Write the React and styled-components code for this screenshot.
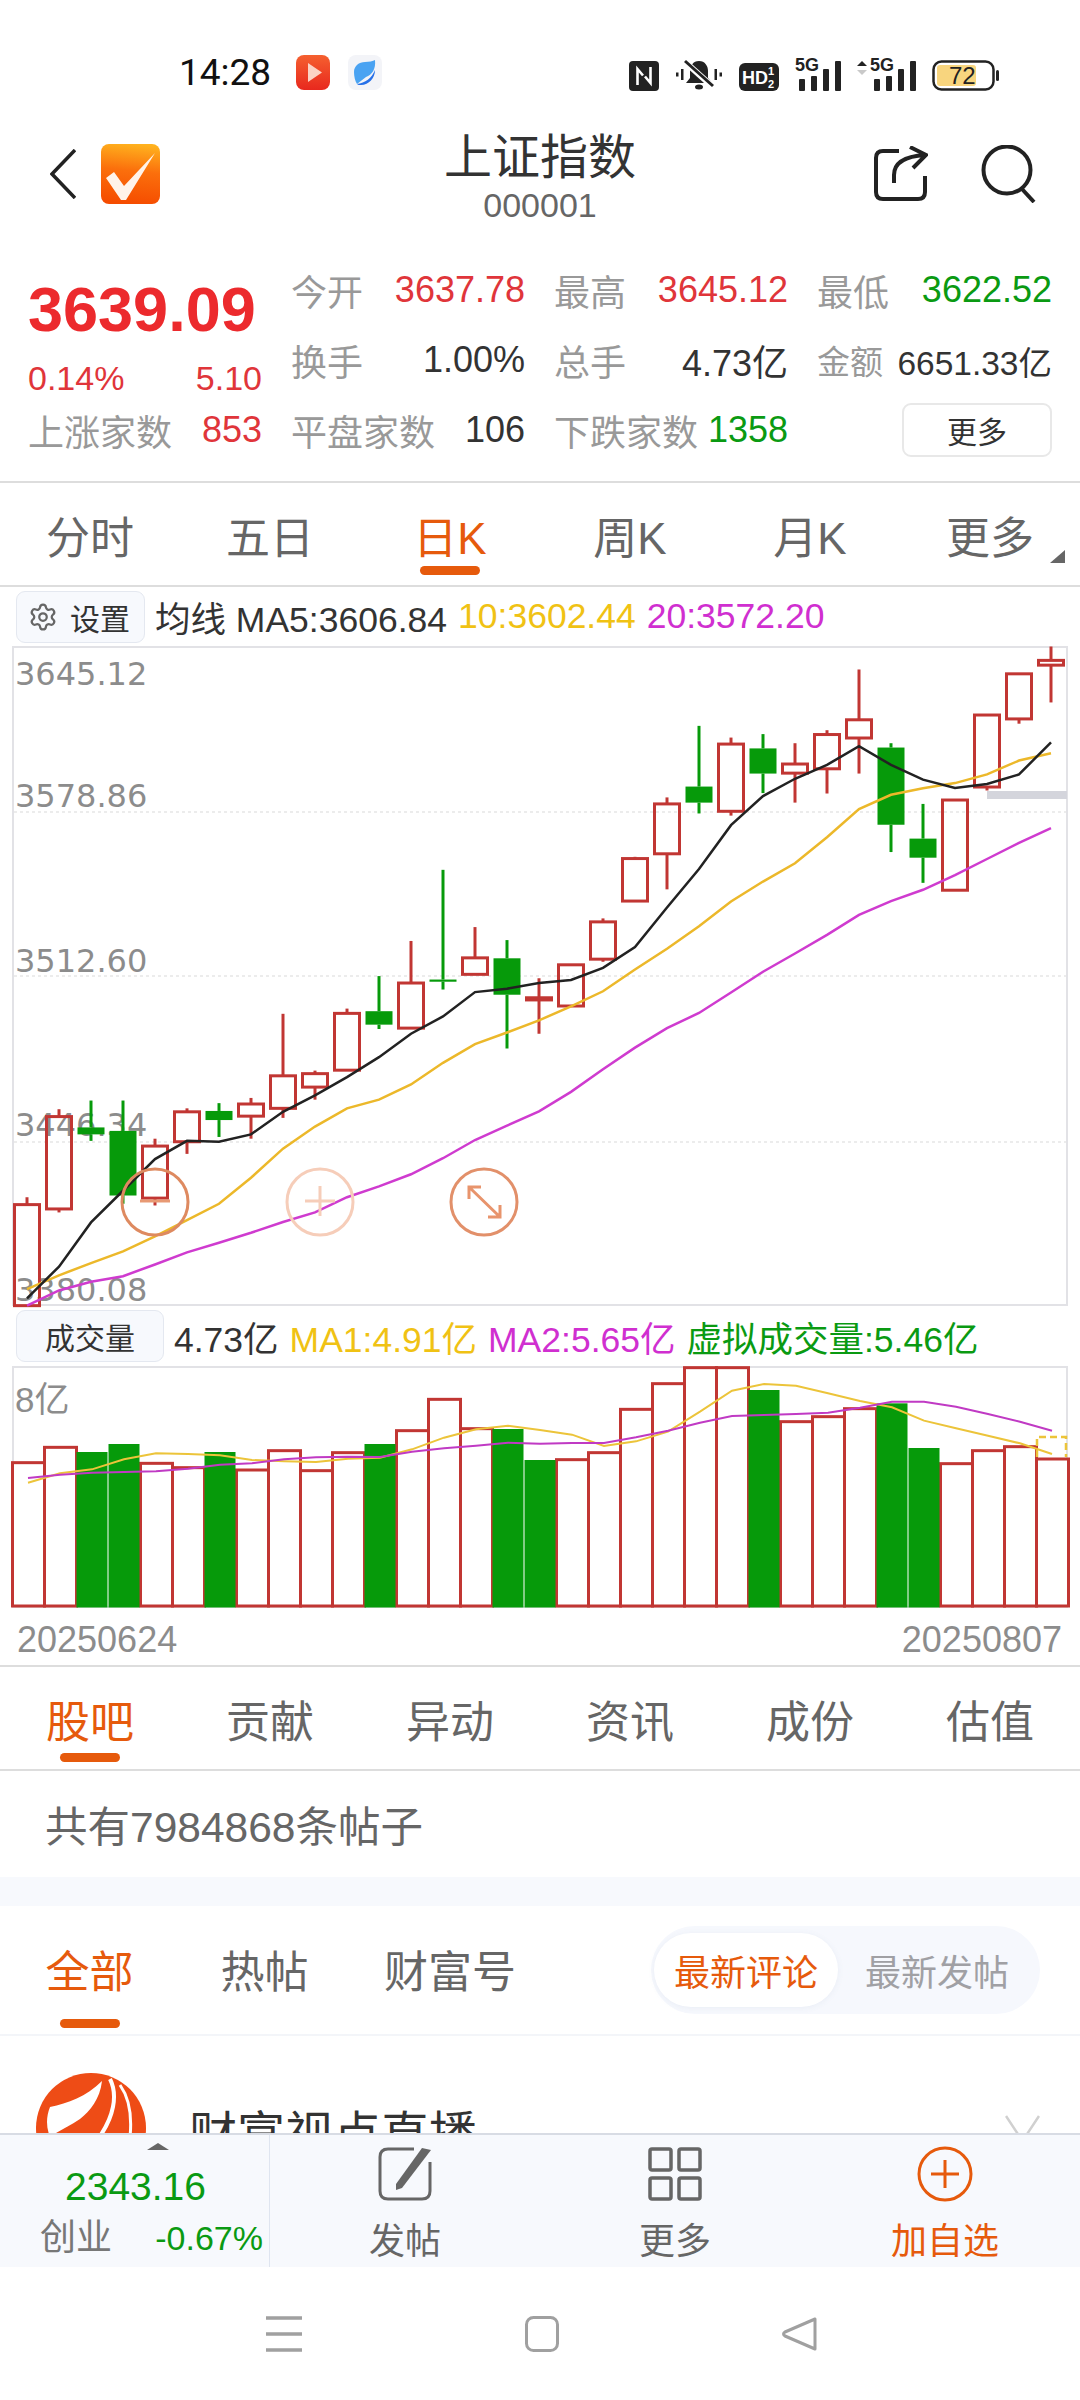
import React from "react";
import styled, { createGlobalStyle } from "styled-components";
import { Settings } from "lucide-react";

const SANS = `"Liberation Sans", "Noto Sans CJK SC", sans-serif`;
const RED = "#e0353a";
const GREEN = "#0a9a12";
const ORANGE = "#e65a0c";
const CANDLE_RED = "#c13633";
const CANDLE_GREEN = "#069a0a";
const YELLOW = "#f0c214";
const MAGENTA = "#d02fd0";

const GlobalStyle = createGlobalStyle`
    html, body {
        margin: 0;
        padding: 0;
        background: #fff;
        font-family: ${SANS};
    }
`;

const Page = styled.div`
    width: 1080px;
    height: 2400px;
    overflow: hidden;
    background: #fff;
    display: flex;
    flex-direction: column;
`;

/* status bar */
const StatusBar = styled.div`
    height: 96px;
    padding: 24px 81px 0 179px;
    display: flex;
    align-items: center;
`;

const Clock = styled.div`
    font-family: Roboto, ${SANS};
    font-size: 37px;
    font-weight: 400;
    color: #111;
    width: 117px;
`;

const AppDot = styled.svg`
    display: block;
    margin-right: 18px;
`;

const StatusIcons = styled.div`
    margin-left: auto;
    display: flex;
    align-items: flex-end;
    gap: 16px;
`;

const IconText = styled.text`
    font-family: "Liberation Sans", sans-serif;
    font-size: ${(p) => p.$size}px;
    font-weight: ${(p) => p.$weight || 700};
    fill: ${(p) => p.$fill || "#222"};
`;

/* header */
const Header = styled.div`
    height: 108px;
    display: grid;
    grid-template-columns: 1fr auto 1fr;
    align-items: center;
`;

const HeaderLeft = styled.div`
    padding-left: 50px;
    display: flex;
    align-items: center;
    gap: 25px;
`;

const HeaderRight = styled.div`
    padding-right: 44px;
    display: flex;
    justify-content: flex-end;
    align-items: center;
    gap: 53px;
`;

const TitleBlock = styled.div`
    align-self: start;
    margin-top: 11px;
    text-align: center;
`;

const Title = styled.div`
    font-size: 48px;
    line-height: 54px;
    color: #333;
`;

const Code = styled.div`
    font-size: 34px;
    line-height: 38px;
    margin-top: 1px;
    color: #666;
`;

/* quote */
const Quote = styled.div`
    height: 255px;
    box-sizing: border-box;
    border-bottom: 2px solid #ddd;
    padding: 27px 28px 0;
    display: grid;
    grid-template-columns: 234px 234px 234px 235px;
    grid-auto-rows: 70px;
    column-gap: 29px;
`;

const PriceBlock = styled.div`
    grid-row: span 2;
    grid-column: 1;
`;

const Price = styled.div`
    margin-top: 19px;
    font-size: 63px;
    line-height: 70px;
    font-weight: 700;
    color: #ec2a2d;
`;

const Change = styled.div`
    margin-top: 14px;
    display: flex;
    justify-content: space-between;
    font-size: 34px;
    line-height: 40px;
    color: ${RED};
`;

const Cell = styled.div`
    display: flex;
    justify-content: space-between;
    align-items: center;
`;

const Label = styled.span`
    font-size: ${(p) => p.$size || 36}px;
    color: #999;
`;

const Value = styled.span`
    font-size: ${(p) => p.$size || 36}px;
    color: ${(p) => p.$color || "#333"};
`;

const MoreCell = styled.div`
    display: flex;
    justify-content: flex-end;
    align-items: center;
`;

const MoreButton = styled.div`
    width: 150px;
    height: 54px;
    box-sizing: border-box;
    border: 2px solid #e8e8e8;
    border-radius: 9px;
    font-size: 30px;
    color: #333;
    display: flex;
    align-items: center;
    justify-content: center;
`;

/* tabs */
const TabBar = styled.div`
    height: 104px;
    box-sizing: border-box;
    padding-top: 31px;
    border-bottom: 2px solid #ddd;
    display: flex;
`;

const TabItem = styled.div`
    position: relative;
    flex: 1;
    display: flex;
    flex-direction: column;
    align-items: center;
`;

const TabText = styled.div`
    font-size: 44px;
    line-height: 50px;
    color: ${(p) => (p.$active ? ORANGE : "#666")};
`;

const TabLine = styled.div`
    width: 60px;
    height: 9px;
    margin-top: ${(p) => p.$top}px;
    border-radius: 5px;
    background: ${ORANGE};
`;

const CornerMark = styled.div`
    position: absolute;
    right: 15px;
    top: 36px;
    width: 0;
    height: 0;
    border-left: 15px solid transparent;
    border-bottom: 13px solid #666;
`;

/* chart */
const ChartHead = styled.div`
    height: ${(p) => p.$height}px;
    padding-left: 16px;
    display: flex;
    align-items: center;
    gap: 11px;
    font-size: 35.5px;
`;

const HeadButton = styled.div`
    height: 52px;
    padding: 0 ${(p) => p.$pad}px 0 11px;
    box-sizing: border-box;
    margin-right: -1px;
    border: 1.5px solid #e4e8f0;
    border-radius: 9px;
    background: #f7f9fd;
    display: flex;
    align-items: center;
    justify-content: center;
    gap: 12px;
    font-size: 30px;
    color: #333;
    min-width: ${(p) => p.$min}px;
`;

const HeadValue = styled.span`
    color: ${(p) => p.$color || "#333"};
`;

const ChartSvg = styled.svg`
    display: block;
    margin: 0 12px;
    flex: none;
    overflow: visible;
`;

const AxisText = styled.text`
    font-family: "DejaVu Sans", sans-serif;
    font-size: 32px;
    fill: #8c8c8c;
`;

const VolumeLabel = styled.text`
    font-family: ${SANS};
    font-size: 35px;
    fill: #8c8c8c;
`;

const DateRow = styled.div`
    height: 59px;
    box-sizing: border-box;
    padding: 12px 18px 0 17px;
    border-bottom: 2px solid #ddd;
    display: flex;
    justify-content: space-between;
    font-size: 36px;
    line-height: 40px;
    color: #8c8c8c;
`;

/* posts */
const CountRow = styled.div`
    height: 106px;
    box-sizing: border-box;
    padding: 0 0 2px 45px;
    display: flex;
    align-items: center;
    font-size: 42.5px;
    color: #666;
`;

const Band = styled.div`
    height: 29px;
    background: #f7f9fd;
`;

const FilterRow = styled.div`
    height: 130px;
    box-sizing: border-box;
    padding-top: 42px;
    border-bottom: 2px solid #f3f5f9;
    display: flex;
    align-items: flex-start;
`;

const FilterTabs = styled.div`
    margin-left: 2px;
    display: grid;
    grid-template-columns: 175px 175px 196px;
`;

const FilterTab = styled.div`
    display: flex;
    flex-direction: column;
    align-items: center;
`;

const Toggle = styled.div`
    margin: -22px 40px 0 auto;
    width: 389px;
    height: 88px;
    padding: 6px 3px;
    box-sizing: border-box;
    border-radius: 44px;
    background: #f6f8fd;
    display: flex;
    align-items: center;
`;

const ToggleItem = styled.div`
    width: ${(p) => (p.$active ? 184 : 198)}px;
    height: 74px;
    border-radius: 37px;
    background: ${(p) => (p.$active ? "#fff" : "transparent")};
    box-shadow: ${(p) => (p.$active ? "0 1px 6px rgba(90,110,150,0.08)" : "none")};
    color: ${(p) => (p.$active ? ORANGE : "#a0a0a4")};
    font-size: 36px;
    display: flex;
    align-items: center;
    justify-content: center;
`;

const PostRow = styled.div`
    height: 97px;
    overflow: hidden;
    padding-left: 36px;
    display: flex;
    align-items: flex-start;
`;

const PostLogo = styled.svg`
    display: block;
    margin-top: 37px;
    flex: none;
`;

const PostName = styled.div`
    margin: 72px 0 0 43px;
    font-size: 48px;
    line-height: 54px;
    color: #333;
`;

const Chevron = styled.svg`
    display: block;
    margin: 79px 40px 0 auto;
    flex: none;
`;

/* bottom bar */
const BottomBar = styled.div`
    height: 134px;
    box-sizing: border-box;
    border-top: 2px solid #d8dce4;
    background: #f7f9fd;
    display: flex;
`;

const IndexBlock = styled.div`
    width: 270px;
    box-sizing: border-box;
    border-right: 1px solid #dfe5f0;
    padding: 8px 6px 0 40px;
    display: flex;
    flex-direction: column;
`;

const IndexArrow = styled.div`
    align-self: center;
    margin-left: 12px;
    width: 0;
    height: 0;
    border-left: 11px solid transparent;
    border-right: 11px solid transparent;
    border-bottom: 7px solid #666;
`;

const IndexValue = styled.div`
    margin-top: 14px;
    padding-left: 25px;
    font-size: 39px;
    line-height: 46px;
    color: ${GREEN};
`;

const IndexRow = styled.div`
    margin-top: 7px;
    display: flex;
    justify-content: space-between;
    align-items: center;
    line-height: 42px;
`;

const Action = styled.div`
    width: 270px;
    padding-top: 11px;
    display: flex;
    flex-direction: column;
    align-items: center;
`;

const ActionLabel = styled.div`
    margin-top: 20px;
    font-size: 36px;
    line-height: 40px;
    color: ${(p) => p.$color || "#666"};
`;

/* system nav */
const NavBar = styled.div`
    height: 133px;
    display: flex;
    justify-content: center;
    align-items: center;
    padding-left: 4px;
`;

const NavCell = styled.div`
    width: 258px;
    display: flex;
    justify-content: center;
`;

// candles, read off the chart: high, body top, body bottom, low, red/green
const CANDLES = [
    [1285, 1302, 1535, 1535, "r"], [1082, 1099, 1312, 1320, "r"], [1062, 1124, 1140, 1155, "g"],
    [1062, 1132, 1281, 1300, "g"], [1150, 1167, 1287, 1304, "r"], [1080, 1088, 1157, 1185, "r"],
    [1068, 1086, 1107, 1146, "g"], [1056, 1070, 1098, 1150, "r"], [862, 1005, 1080, 1102, "r"],
    [993, 1000, 1031, 1060, "r"], [850, 861, 992, 992, "r"], [775, 856, 887, 897, "g"],
    [694, 791, 895, 895, "r"], [530, 783, 788, 806, "g"], [662, 733, 771, 771, "r"],
    [692, 734, 818, 942, "g"], [780, 825, 830, 908, "r"], [749, 749, 844, 844, "r"],
    [642, 650, 736, 742, "r"], [500, 504, 602, 602, "r"], [363, 378, 493, 575, "r"],
    [198, 338, 375, 400, "g"], [225, 240, 395, 405, "r"], [217, 250, 308, 353, "g"],
    [238, 286, 307, 375, "r"], [208, 218, 297, 354, "r"], [68, 184, 226, 308, "r"],
    [238, 248, 426, 489, "g"], [378, 458, 502, 560, "g"], [368, 369, 577, 577, "r"],
    [172, 173, 339, 347, "r"], [77, 78, 182, 193, "r"], [15, 47, 58, 144, "r"],
];

const MA5 = [1518, 1445, 1343, 1270, 1197, 1155, 1157, 1140, 1088, 1050, 1008, 962, 908, 868, 812, 804, 791,
    784, 756, 708, 617, 528, 427, 360, 320, 288, 245, 288, 322, 341, 332, 310, 236];
const MA10 = [1497, 1465, 1437, 1410, 1375, 1338, 1300, 1240, 1173, 1122, 1080, 1060, 1025, 975, 932, 905, 877,
    845, 810, 760, 712, 660, 603, 557, 515, 455, 390, 357, 342, 330, 310, 278, 261];
const MA20 = [1535, 1500, 1480, 1467, 1440, 1412, 1390, 1367, 1342, 1320, 1285, 1260, 1232, 1195, 1153, 1120, 1087,
    1042, 990, 940, 895, 860, 813, 765, 723, 680, 634, 602, 576, 542, 505, 468, 434];

const VOLUME = [
    [488, "r"], [442, "r"], [456, "g"], [432, "g"], [490, "r"], [503, "r"], [456, "g"], [510, "r"], [452, "r"],
    [512, "r"], [458, "r"], [432, "g"], [392, "r"], [298, "r"], [386, "r"], [387, "g"], [480, "g"], [479, "r"],
    [458, "r"], [328, "r"], [251, "r"], [203, "r"], [203, "r"], [270, "g"], [365, "r"], [350, "r"], [326, "r"],
    [310, "g"], [444, "g"], [491, "r"], [452, "r"], [440, "r"], [477, "r"],
];
const VOL_MA1 = [548, 520, 508, 478, 460, 462, 466, 480, 484, 486, 476, 473, 448, 413, 388, 377, 390, 404, 438, 424, 395,
    335, 272, 252, 257, 280, 303, 322, 362, 385, 407, 430, 462];
const VOL_MA2 = [534, 524, 518, 516, 514, 506, 494, 490, 478, 472, 470, 471, 455, 445, 437, 428, 431, 429, 429, 412, 392,
    368, 348, 345, 342, 338, 323, 305, 305, 320, 342, 365, 392];

const candleX = (i) => 27 + 32 * i;
const candleY = (z) => 640 + z / 2.306;
const volX = (i) => 28 + 32 * i;
const volY = (z) => 1300 + z / 3;

const linePoints = (values, xOf, yOf) => values.map((v, i) => `${xOf(i)},${yOf(v)}`).join(" ");

const KChart = () => (
    <ChartSvg width="1056" height="660" viewBox="12 646 1056 660">
        <rect x="13" y="647" width="1054" height="658" fill="#fff" stroke="#e2e2e6" strokeWidth="2" />
        {[812, 976, 1142].map((y) => (
            <line key={y} x1="14" x2="1066" y1={y} y2={y} stroke="#e6e6e6" strokeWidth="1.5" strokeDasharray="3 3" />
        ))}
        <AxisText x="15" y="685">3645.12</AxisText>
        <AxisText x="15" y="807">3578.86</AxisText>
        <AxisText x="15" y="972">3512.60</AxisText>
        <AxisText x="15" y="1136">3446.34</AxisText>
        <AxisText x="15" y="1301">3380.08</AxisText>
        <rect x="987" y="791" width="80" height="8" fill="#d4d5dc" />
        {CANDLES.map(([hi, top, bot, lo, kind], i) => {
            const x = candleX(i);
            const color = kind === "r" ? CANDLE_RED : CANDLE_GREEN;
            const t = candleY(top);
            const b = candleY(bot);
            return (
                <g key={i}>
                    <line x1={x} x2={x} y1={candleY(hi)} y2={t} stroke={color} strokeWidth="3" />
                    <line x1={x} x2={x} y1={b} y2={candleY(lo)} stroke={color} strokeWidth="3" />
                    {kind === "r" ? (
                        <rect x={x - 12.5} y={t} width="25" height={b - t} fill="none" stroke={color} strokeWidth="3" />
                    ) : (
                        <rect x={x - 13.5} y={t} width="27" height={b - t} fill={color} />
                    )}
                </g>
            );
        })}
        <polyline points={linePoints(MA20, candleX, candleY)} fill="none" stroke="#cf3bcf" strokeWidth="2.5" />
        <polyline points={linePoints(MA10, candleX, candleY)} fill="none" stroke="#ecb82a" strokeWidth="2.5" />
        <polyline points={linePoints(MA5, candleX, candleY)} fill="none" stroke="#222" strokeWidth="2.5" />

        <g fill="none" strokeWidth="3">
            <circle cx="155" cy="1202" r="33" stroke="#de8a60" />
            <line x1="140" x2="170" y1="1201" y2="1201" stroke="#e89a74" />
            <circle cx="320" cy="1202" r="33" stroke="#f6cdb9" />
            <path d="M305 1201H335M320 1186V1216" stroke="#f6cdb9" />
            <circle cx="484" cy="1202" r="33" stroke="#e2906a" />
            <path d="M469 1187L500 1217M469 1199V1187H481M500 1205V1217H488" stroke="#e8946c" />
        </g>
    </ChartSvg>
);

const VolumeChart = () => (
    <ChartSvg width="1056" height="242" viewBox="12 1366 1056 242">
        <rect x="13" y="1367" width="1054" height="240" fill="#fff" stroke="#e2e2e6" strokeWidth="2" />
        <VolumeLabel x="15" y="1412">8亿</VolumeLabel>
        {VOLUME.map(([top, kind], i) => {
            if (kind === "g") return null;
            const y = volY(top);
            return <rect key={i} x={12.5 + 32 * i} y={y} width="32" height={1606 - y} fill="#fff" stroke={CANDLE_RED} strokeWidth="3" />;
        })}
        {VOLUME.map(([top, kind], i) => {
            if (kind === "r") return null;
            const y = volY(top);
            return <rect key={i} x={12.5 + 32 * i} y={y} width="31" height={1607.5 - y} fill={CANDLE_GREEN} />;
        })}
        <polyline points={linePoints(VOL_MA1, volX, volY)} fill="none" stroke="#ecc43a" strokeWidth="2" />
        <polyline points={linePoints(VOL_MA2, volX, volY)} fill="none" stroke="#c03ac4" strokeWidth="2" />
        <path d="M1037 1457V1437H1066V1457" fill="none" stroke="#ecc43a" strokeWidth="2.5" strokeDasharray="7 4" />
    </ChartSvg>
);

const Signal = ({ shift = 0 }) => (
    <svg width={46 + shift} height="38" viewBox={`0 -5 ${46 + shift} 38`}>
        {shift > 0 && (
            <>
                <path d="M0 8L5 3L10 8Z" fill="#222" />
                <path d="M0 12L5 17L10 12Z" fill="#c9c9c9" />
            </>
        )}
        <IconText x={shift} y="13" $size={18}>5G</IconText>
        <rect x={4 + shift} y="21" width="6" height="12" rx="1" fill="#222" />
        <rect x={16 + shift} y="18" width="6" height="15" rx="1" fill="#222" />
        <rect x={28 + shift} y="11" width="6" height="22" rx="1" fill="#222" />
        <rect x={40 + shift} y="3" width="6" height="30" rx="1" fill="#222" />
    </svg>
);

const StatusIconSet = () => (
    <StatusIcons>
        <svg width="30" height="30" viewBox="0 0 30 30">
            <rect width="30" height="30" rx="4" fill="#222" />
            <path d="M8.5 24V8L14 14.5M21.5 6V22L16 15.5" fill="none" stroke="#fff" strokeWidth="2.6" />
        </svg>
        <svg width="48" height="33" viewBox="0 0 48 33">
            <path d="M24 3c-6 0-9 5-9 10v7l-4 5h26l-4-5v-7c0-5-3-10-9-10z" fill="#222" />
            <ellipse cx="24" cy="29" rx="4" ry="2.5" fill="#222" />
            <line x1="9" y1="3" x2="38" y2="29" stroke="#fff" strokeWidth="6" />
            <line x1="10" y1="3" x2="38" y2="28" stroke="#222" strokeWidth="3" />
            <path d="M1 14.5h2.5v4H1zM6 11h2.5v11H6zM39.5 11H42v11h-2.5zM44.5 14.5H47v4h-2.5z" fill="#222" />
        </svg>
        <svg width="40" height="28" viewBox="0 0 40 28">
            <rect width="40" height="28" rx="6" fill="#222" />
            <IconText x="3" y="21" $size={18} $fill="#fff">HD</IconText>
            <IconText x="29" y="12" $size={11} $fill="#fff">1</IconText>
            <IconText x="29" y="25" $size={11} $fill="#fff">2</IconText>
        </svg>
        <Signal />
        <Signal shift={13} />
        <svg width="67" height="31" viewBox="0 0 67 31">
            <rect x="1.5" y="1.5" width="60" height="28" rx="8" fill="none" stroke="#222" strokeWidth="2.5" />
            <rect x="5" y="5" width="39" height="21" rx="3" fill="#f8d57e" />
            <rect x="64" y="10" width="3" height="11" rx="1.5" fill="#222" />
            <IconText x="17" y="24" $size={24} $weight={400}>72</IconText>
        </svg>
    </StatusIcons>
);

const App = () => {
    return (
        <Page>
            <GlobalStyle />
            <StatusBar>
                <Clock>14:28</Clock>
                <AppDot width="34" height="35" viewBox="0 0 34 35">
                    <defs>
                        <linearGradient id="playRed" x1="0" y1="0" x2="0" y2="1">
                            <stop offset="0" stopColor="#f5602f" />
                            <stop offset="1" stopColor="#e8281e" />
                        </linearGradient>
                    </defs>
                    <rect width="34" height="35" rx="8" fill="url(#playRed)" />
                    <path d="M12 8L26 17.5L12 27Z" fill="#fbd3c4" />
                </AppDot>
                <AppDot width="34" height="35" viewBox="0 0 34 35">
                    <rect width="34" height="35" rx="8" fill="#f3f4f8" />
                    <path d="M6 17c0-6 5-10 11-10c4 0 8-1 10-2c1 9-3 15-9 17l-9 7c-2-3-3-8-3-12z" fill="#4aa3f2" />
                    <path d="M9 29c8-1 15-6 18-14c0 8-6 15-14 15c-2 0-3 0-4-1z" fill="#2670e8" />
                </AppDot>
                <StatusIconSet />
            </StatusBar>

            <Header>
                <HeaderLeft>
                    <svg width="26" height="50" viewBox="0 0 26 50">
                        <path d="M25 1L2 25L25 49" fill="none" stroke="#222" strokeWidth="3.5" />
                    </svg>
                    <svg width="59" height="60" viewBox="0 0 59 60">
                        <defs>
                            <linearGradient id="logoFill" x1="0.6" y1="0" x2="0.5" y2="1">
                                <stop offset="0" stopColor="#ffb21e" />
                                <stop offset="0.45" stopColor="#fb6f0c" />
                                <stop offset="1" stopColor="#f54c00" />
                            </linearGradient>
                        </defs>
                        <rect width="59" height="60" rx="8" fill="url(#logoFill)" />
                        <path d="M5 34L13 28L23 42L54 9L25 56H20Z" fill="#fff3ea" />
                    </svg>
                </HeaderLeft>
                <TitleBlock>
                    <Title>上证指数</Title>
                    <Code>000001</Code>
                </TitleBlock>
                <HeaderRight>
                    <svg width="55" height="56" viewBox="0 0 55 56">
                        <path d="M26 5H10Q3 5 3 12V46Q3 53 10 53H45Q52 53 52 46V30" fill="none" stroke="#222" strokeWidth="4" />
                        <path d="M21 37V29Q21 11 52 9M37 1L53 9L40 22" fill="none" stroke="#222" strokeWidth="4" />
                    </svg>
                    <svg width="55" height="58" viewBox="0 0 55 58">
                        <circle cx="26" cy="25" r="23.5" fill="none" stroke="#222" strokeWidth="4" />
                        <line x1="41" y1="44" x2="53" y2="57" stroke="#222" strokeWidth="4" />
                    </svg>
                </HeaderRight>
            </Header>

            <Quote>
                <PriceBlock>
                    <Price>3639.09</Price>
                    <Change>
                        <span>0.14%</span>
                        <span>5.10</span>
                    </Change>
                </PriceBlock>
                <Cell><Label>今开</Label><Value $color={RED}>3637.78</Value></Cell>
                <Cell><Label>最高</Label><Value $color={RED}>3645.12</Value></Cell>
                <Cell><Label>最低</Label><Value $color={GREEN}>3622.52</Value></Cell>
                <Cell><Label>换手</Label><Value>1.00%</Value></Cell>
                <Cell><Label>总手</Label><Value>4.73亿</Value></Cell>
                <Cell><Label $size={33}>金额</Label><Value $size={33.5}>6651.33亿</Value></Cell>
                <Cell><Label>上涨家数</Label><Value $color={RED}>853</Value></Cell>
                <Cell><Label>平盘家数</Label><Value>106</Value></Cell>
                <Cell><Label>下跌家数</Label><Value $color={GREEN}>1358</Value></Cell>
                <MoreCell><MoreButton>更多</MoreButton></MoreCell>
            </Quote>

            <TabBar>
                <TabItem><TabText>分时</TabText></TabItem>
                <TabItem><TabText>五日</TabText></TabItem>
                <TabItem>
                    <TabText $active>日K</TabText>
                    <TabLine $top={2} />
                </TabItem>
                <TabItem><TabText>周K</TabText></TabItem>
                <TabItem><TabText>月K</TabText></TabItem>
                <TabItem>
                    <TabText>更多</TabText>
                    <CornerMark />
                </TabItem>
            </TabBar>

            <ChartHead $height={59}>
                <HeadButton $pad={14} $min={127}>
                    <Settings size={30} color="#666" strokeWidth={1.8} />
                    设置
                </HeadButton>
                <HeadValue>均线 MA5:3606.84</HeadValue>
                <HeadValue $color={YELLOW}>10:3602.44</HeadValue>
                <HeadValue $color={MAGENTA}>20:3572.20</HeadValue>
            </ChartHead>
            <KChart />

            <ChartHead $height={60}>
                <HeadButton $pad={11} $min={148}>成交量</HeadButton>
                <HeadValue>4.73亿</HeadValue>
                <HeadValue $color={YELLOW}>MA1:4.91亿</HeadValue>
                <HeadValue $color={MAGENTA}>MA2:5.65亿</HeadValue>
                <HeadValue $color={GREEN}>虚拟成交量:5.46亿</HeadValue>
            </ChartHead>
            <VolumeChart />
            <DateRow>
                <span>20250624</span>
                <span>20250807</span>
            </DateRow>

            <TabBar>
                <TabItem>
                    <TabText $active>股吧</TabText>
                    <TabLine $top={5} />
                </TabItem>
                <TabItem><TabText>贡献</TabText></TabItem>
                <TabItem><TabText>异动</TabText></TabItem>
                <TabItem><TabText>资讯</TabText></TabItem>
                <TabItem><TabText>成份</TabText></TabItem>
                <TabItem><TabText>估值</TabText></TabItem>
            </TabBar>

            <CountRow>共有7984868条帖子</CountRow>
            <Band />

            <FilterRow>
                <FilterTabs>
                    <FilterTab>
                        <TabText $active>全部</TabText>
                        <TabLine $top={21} />
                    </FilterTab>
                    <FilterTab><TabText>热帖</TabText></FilterTab>
                    <FilterTab><TabText>财富号</TabText></FilterTab>
                </FilterTabs>
                <Toggle>
                    <ToggleItem $active>最新评论</ToggleItem>
                    <ToggleItem>最新发帖</ToggleItem>
                </Toggle>
            </FilterRow>

            <PostRow>
                <PostLogo width="110" height="110" viewBox="0 0 110 110">
                    <circle cx="55" cy="55" r="55" fill="#ee4c16" />
                    <path d="M14 34C32 30 50 24 66 8C64 26 54 38 44 46C32 54 22 58 14 64C10 54 10 44 14 34Z" fill="#fff" />
                    <path d="M74 6C82 22 78 44 62 66" fill="none" stroke="#fff" strokeWidth="4" />
                    <path d="M84 12C94 26 96 44 94 64" fill="none" stroke="#fff" strokeWidth="3" />
                </PostLogo>
                <PostName>财富视点直播</PostName>
                <Chevron width="35" height="30" viewBox="0 0 35 30">
                    <path d="M1 1L17.5 26L34 1" fill="none" stroke="#d0d0d0" strokeWidth="2.5" />
                </Chevron>
            </PostRow>

            <BottomBar>
                <IndexBlock>
                    <IndexArrow />
                    <IndexValue>2343.16</IndexValue>
                    <IndexRow>
                        <Value $size={36} $color="#777">创业</Value>
                        <Value $size={34} $color={GREEN}>-0.67%</Value>
                    </IndexRow>
                </IndexBlock>
                <Action>
                    <svg width="54" height="56" viewBox="0 0 54 56">
                        <path d="M36 3H10Q2 3 2 11V45Q2 53 10 53H44Q52 53 52 45V16" fill="none" stroke="#666" strokeWidth="3" />
                        <path d="M18 38L44 2L53 4L24 42L18 44Z" fill="#666" />
                    </svg>
                    <ActionLabel>发帖</ActionLabel>
                </Action>
                <Action>
                    <svg width="54" height="56" viewBox="0 0 54 56">
                        <g fill="none" stroke="#666" strokeWidth="3.5">
                            <rect x="2" y="3" width="21" height="21" rx="2" />
                            <rect x="31" y="3" width="21" height="21" rx="2" />
                            <rect x="2" y="32" width="21" height="21" rx="2" />
                            <rect x="31" y="32" width="21" height="21" rx="2" />
                        </g>
                    </svg>
                    <ActionLabel>更多</ActionLabel>
                </Action>
                <Action>
                    <svg width="56" height="56" viewBox="0 0 56 56">
                        <circle cx="28" cy="28" r="26" fill="none" stroke={ORANGE} strokeWidth="3" />
                        <path d="M14 28H42M28 14V42" fill="none" stroke={ORANGE} strokeWidth="3" />
                    </svg>
                    <ActionLabel $color={ORANGE}>加自选</ActionLabel>
                </Action>
            </BottomBar>

            <NavBar>
                <NavCell>
                    <svg width="36" height="36" viewBox="0 0 36 36">
                        <path d="M0 2H36M0 18H36M0 34H36" stroke="#a0a0a0" strokeWidth="3.5" />
                    </svg>
                </NavCell>
                <NavCell>
                    <svg width="34" height="36" viewBox="0 0 34 36">
                        <rect x="1.5" y="1.5" width="31" height="33" rx="7" fill="none" stroke="#a0a0a0" strokeWidth="3" />
                    </svg>
                </NavCell>
                <NavCell>
                    <svg width="36" height="36" viewBox="0 0 36 36">
                        <path d="M33 3V33L3 20Q0 18 3 16Z" fill="none" stroke="#a0a0a0" strokeWidth="3" strokeLinejoin="round" />
                    </svg>
                </NavCell>
            </NavBar>
        </Page>
    );
};

export default App;
